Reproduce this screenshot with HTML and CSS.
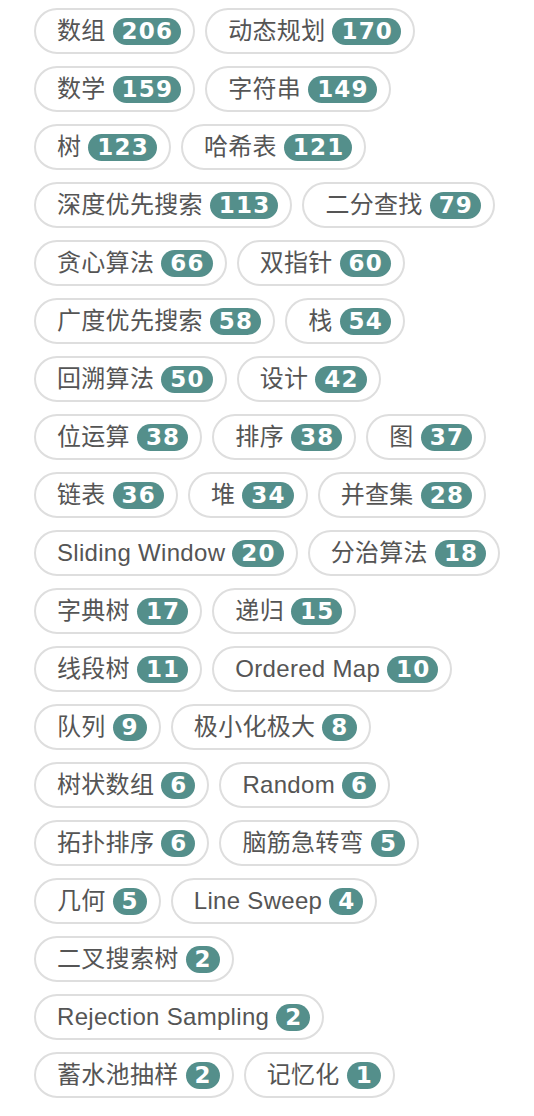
FILE: index.html
```html
<!DOCTYPE html>
<html lang="zh">
<head>
<meta charset="utf-8">
<link rel="stylesheet" href="styles.css">
</head>
<body>
<div class="tags">
  <span class="tag"><span class="name">数组</span><span class="count">206</span></span>
  <span class="tag"><span class="name">动态规划</span><span class="count">170</span></span>
  <span class="tag"><span class="name">数学</span><span class="count">159</span></span>
  <span class="tag"><span class="name">字符串</span><span class="count">149</span></span>
  <span class="tag"><span class="name">树</span><span class="count">123</span></span>
  <span class="tag"><span class="name">哈希表</span><span class="count">121</span></span>
  <span class="tag"><span class="name">深度优先搜索</span><span class="count">113</span></span>
  <span class="tag"><span class="name">二分查找</span><span class="count">79</span></span>
  <span class="tag"><span class="name">贪心算法</span><span class="count">66</span></span>
  <span class="tag"><span class="name">双指针</span><span class="count">60</span></span>
  <span class="tag"><span class="name">广度优先搜索</span><span class="count">58</span></span>
  <span class="tag"><span class="name">栈</span><span class="count">54</span></span>
  <span class="tag"><span class="name">回溯算法</span><span class="count">50</span></span>
  <span class="tag"><span class="name">设计</span><span class="count">42</span></span>
  <span class="tag"><span class="name">位运算</span><span class="count">38</span></span>
  <span class="tag"><span class="name">排序</span><span class="count">38</span></span>
  <span class="tag"><span class="name">图</span><span class="count">37</span></span>
  <span class="tag"><span class="name">链表</span><span class="count">36</span></span>
  <span class="tag"><span class="name">堆</span><span class="count">34</span></span>
  <span class="tag"><span class="name">并查集</span><span class="count">28</span></span>
  <span class="tag"><span class="name">Sliding Window</span><span class="count">20</span></span>
  <span class="tag"><span class="name">分治算法</span><span class="count">18</span></span>
  <span class="tag"><span class="name">字典树</span><span class="count">17</span></span>
  <span class="tag"><span class="name">递归</span><span class="count">15</span></span>
  <span class="tag"><span class="name">线段树</span><span class="count">11</span></span>
  <span class="tag"><span class="name">Ordered Map</span><span class="count">10</span></span>
  <span class="tag"><span class="name">队列</span><span class="count">9</span></span>
  <span class="tag"><span class="name">极小化极大</span><span class="count">8</span></span>
  <span class="tag"><span class="name">树状数组</span><span class="count">6</span></span>
  <span class="tag"><span class="name">Random</span><span class="count">6</span></span>
  <span class="tag"><span class="name">拓扑排序</span><span class="count">6</span></span>
  <span class="tag"><span class="name">脑筋急转弯</span><span class="count">5</span></span>
  <span class="tag"><span class="name">几何</span><span class="count">5</span></span>
  <span class="tag"><span class="name">Line Sweep</span><span class="count">4</span></span>
  <span class="tag"><span class="name">二叉搜索树</span><span class="count">2</span></span>
  <span class="tag"><span class="name">Rejection Sampling</span><span class="count">2</span></span>
  <span class="tag"><span class="name">蓄水池抽样</span><span class="count">2</span></span>
  <span class="tag"><span class="name">记忆化</span><span class="count">1</span></span>
</div>
</body>
</html>
```

FILE: styles.css
```css
html, body {
  margin: 0;
  padding: 0;
  background: #ffffff;
}

.tags {
  display: flex;
  flex-wrap: wrap;
  column-gap: 10px;
  row-gap: 12px;
  width: 482px;
  padding: 8px 0 0 34px;
  font-family: "Liberation Sans", "Noto Sans CJK SC", sans-serif;
}

.tag {
  box-sizing: border-box;
  display: flex;
  align-items: center;
  gap: 7px;
  height: 46px;
  padding: 0 12px 0 21px;
  border: 2px solid #dedede;
  border-radius: 23px;
  background: #ffffff;
}

.name {
  font-size: 24px;
  letter-spacing: 0.3px;
  color: #555555;
  line-height: 1;
}

.count {
  display: flex;
  align-items: center;
  justify-content: center;
  height: 27px;
  padding: 0 8px 0 9px;
  border-radius: 14px;
  background: #548f8b;
  color: #ffffff;
  font-family: "DejaVu Sans", sans-serif;
  font-weight: bold;
  font-size: 23px;
  letter-spacing: 1.2px;
  line-height: 1;
}
```
